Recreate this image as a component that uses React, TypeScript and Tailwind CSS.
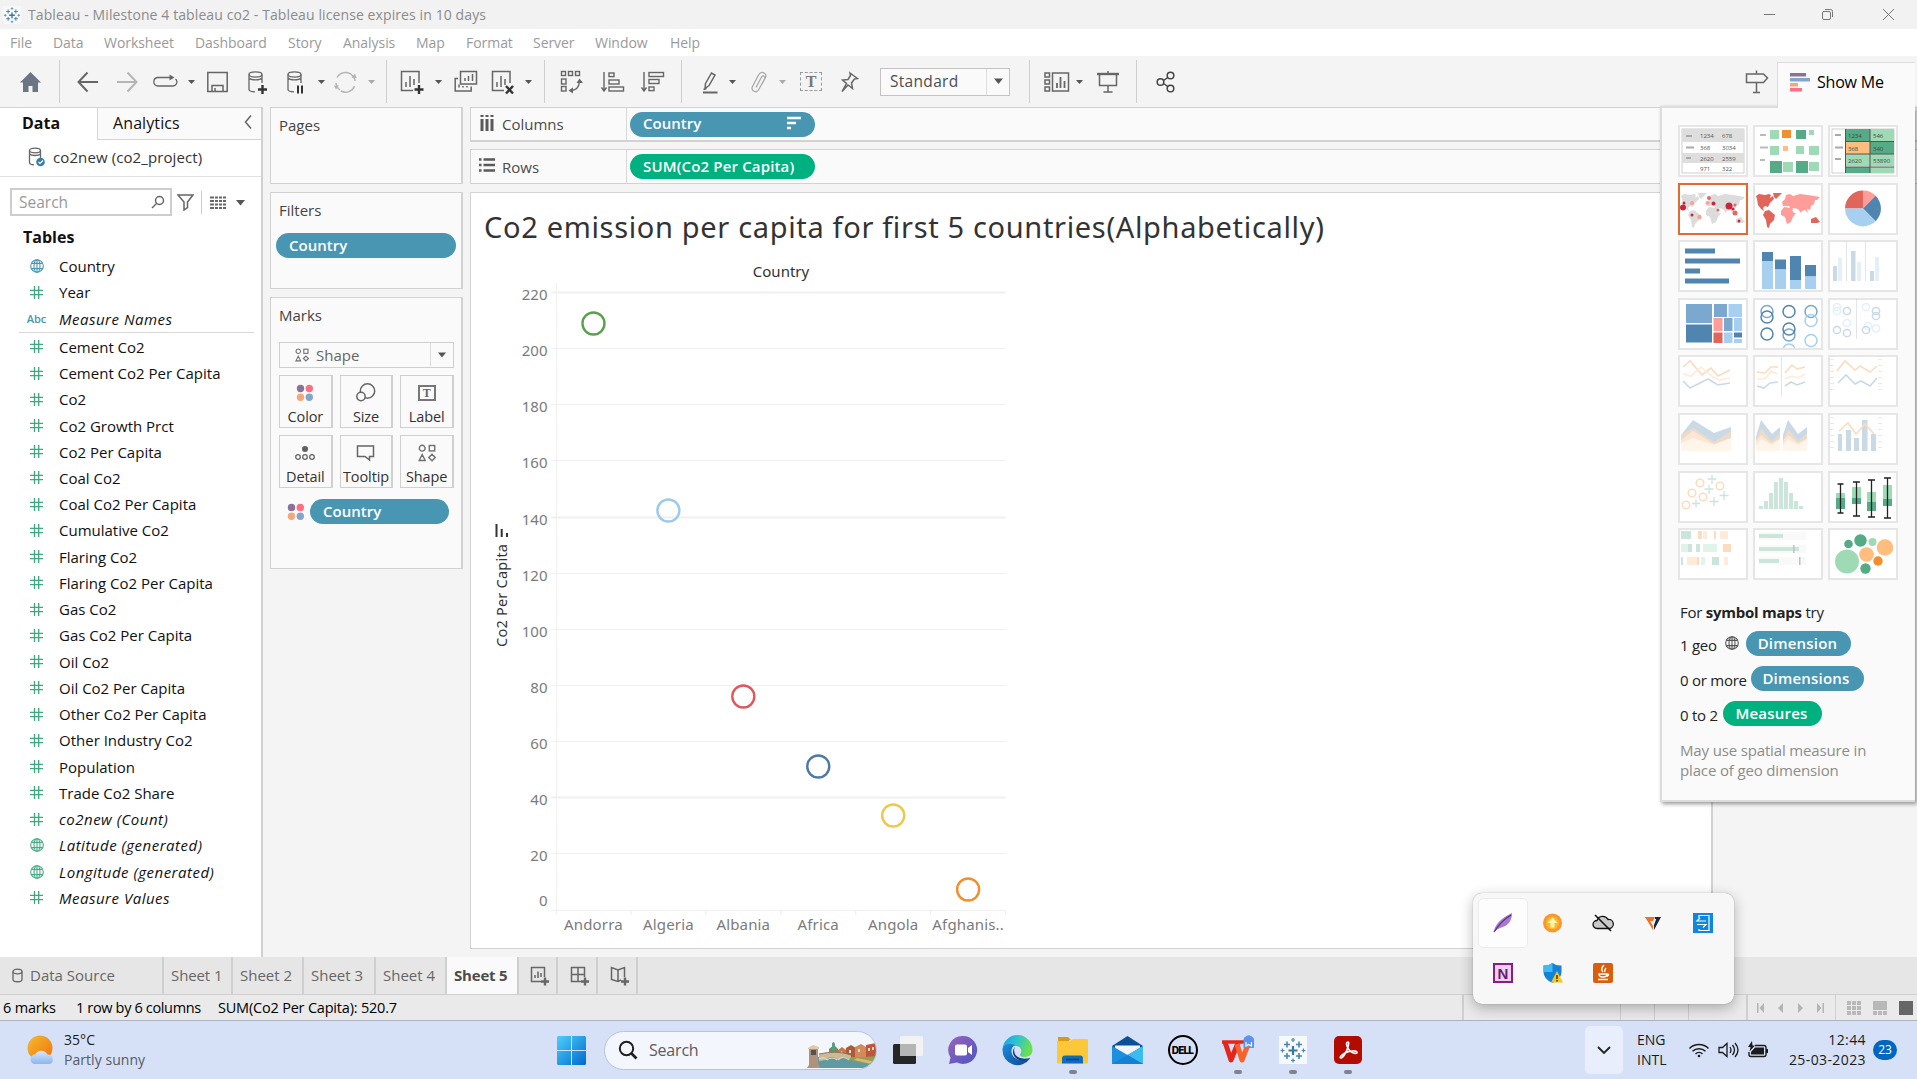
import type { ReactNode } from "react";

const G = "#666666";

function Svg({ w, h = 30, className = "", children, stroke = G, sw = 1.5, fill = "none" }: { w: number; h?: number; className?: string; children: ReactNode; stroke?: string; sw?: number; fill?: string }) {
  return (
    <svg width={w} height={h} viewBox={`0 0 ${w} ${h}`} className={`shrink-0 ${className}`} fill={fill} stroke={stroke} strokeWidth={sw}>
      {children}
    </svg>
  );
}

function Tri({ className = "", color = "#555" }: { className?: string; color?: string }) {
  return (
    <Svg w={7} h={6} className={className} fill={color} stroke="none">
      <path d="M0 1h7L3.500 5z" />
    </Svg>
  );
}

function Sep({ className }: { className: string }) {
  return <div className={`h-[43px] w-px shrink-0 bg-[#cfcfcf] ${className}`} />;
}

function TableauMark({ size, className = "" }: { size: number; className?: string }) {
  return (
    <svg width={size} height={size} viewBox="0 0 28 28" className={`shrink-0 ${className}`} fill="none" stroke="#4a86ad" strokeWidth="1.6">
      <rect x="0" y="0" width="28" height="28" fill="#f7f8fa" stroke="none" />
      <path d="M14 10v9M9.500 14.500h9" strokeWidth="2.200" stroke="#3b78a0" />
      <path d="M8 5.500v6M5 8.500h6M20 5.500v6M17 8.500h6M8 17v6M5 20h6M20 17v6M17 20h6" />
      <path d="M14 2v4M12 4h4M14 22.500v4M12 24.500h4M3.500 12.500v4M1.500 14.500h4M24.500 12.500v4M22.500 14.500h4" strokeWidth="1.2" />
    </svg>
  );
}

function Globe({ color, size = 14 }: { color: string; size?: number }) {
  return (
    <svg width={size} height={size} viewBox="0 0 14 14" className="shrink-0" fill="none" stroke={color} strokeWidth="1.1">
      <circle cx="7" cy="7" r="6.300" />
      <ellipse cx="7" cy="7" rx="3" ry="6.300" />
      <path d="M7 .7v12.600M1.500 4.400h11M1.500 9.600h11" />
    </svg>
  );
}

function Dots() {
  return (
    <Svg w={18} h={18} stroke="none">
      <circle cx="4.500" cy="4.500" r="3.700" fill="#8a729b" />
      <circle cx="13.300" cy="4.500" r="3.700" fill="#fb7183" />
      <circle cx="4.500" cy="13.300" r="3.700" fill="#f3a879" />
      <circle cx="13.300" cy="13.300" r="3.700" fill="#84a5cb" />
    </Svg>
  );
}

function ShapeIcon({ size = 18 }: { size?: number }) {
  return (
    <svg width={size} height={size} viewBox="0 0 18 18" fill="none" stroke="#707070" strokeWidth="1.4" className="shrink-0">
      <circle cx="4.200" cy="4.200" r="2.900" />
      <rect x="11.300" y="1.500" width="5.400" height="5.400" />
      <path d="M4.200 10.500l3 6h-6zM14 10.300l3.200 3.200-3.200 3.200-3.200-3.200z" />
    </svg>
  );
}

function TitleBar() {
  return (
    <div className="flex h-[29px] shrink-0 items-center bg-[#f2f2f2] font-['Open_Sans',sans-serif] text-[14px] text-[#8b8b8b]">
      <TableauMark size={18} className="ml-[3px]" />
      <span className="ml-[7px] tracking-[0.1px]">Tableau - Milestone 4 tableau co2 - Tableau license expires in 10 days</span>
      <Svg w={130} h={20} className="mr-[23px] ml-auto" stroke="#777" sw={1}>
        <path d="M0 9.500h11M119 4l11 11M130 4l-11 11" />
        <rect x="58.500" y="6.500" width="8" height="8" rx="1.500" />
        <path d="M61 4.500h5.500a2 2 0 0 1 2 2V12" />
      </Svg>
    </div>
  );
}

const menus: [string, string][] = [
  ["File", "w-[43px]"], ["Data", "w-[51px]"], ["Worksheet", "w-[91px]"], ["Dashboard", "w-[93px]"], ["Story", "w-[55px]"], ["Analysis", "w-[73px]"],
  ["Map", "w-[50px]"], ["Format", "w-[67px]"], ["Server", "w-[62px]"], ["Window", "w-[75px]"], ["Help", "w-[50px]"],
];

function MenuBar() {
  return (
    <div className="flex h-[27px] shrink-0 items-center bg-white pl-[10px] font-['Open_Sans',sans-serif] text-[14px] tracking-[-0.05px] text-[#9a9a9a]">
      {menus.map(([m, w]) => (
        <span key={m} className={`${w} shrink-0 whitespace-nowrap`}>{m}</span>
      ))}
    </div>
  );
}

function Toolbar() {
  return (
    <div className="flex h-[51px] shrink-0 items-center bg-[#f4f4f4]">
      <Svg w={21} className="ml-[20px]" fill="#6b7584" stroke="none">
        <path d="M10.500 5L0 15.500h3V25h5.500v-6h4v6H18v-9.500h3z" />
      </Svg>
      <Sep className="ml-[18px]" />
      <Svg w={21} className="ml-[17px]" sw={2}><path d="M10.500 5.500L1.500 15l9 9.500M1.500 15H21" /></Svg>
      <Svg w={21} className="ml-[19px]" sw={2} stroke="#b5b5b5"><path d="M10.500 5.500l9 9.500-9 9.500M19.500 15H0" /></Svg>
      <Svg w={25} className="ml-[15px]" sw={1.3}>
        <path d="M17 10.500H4.500a4.300 4.300 0 0 0 0 8.500H20a4 4 0 0 0 2.500-7" />
        <path d="M16.500 7.500l5 3-5 3z" fill={G} stroke="none" />
      </Svg>
      <Tri className="ml-[10px]" />
      <Svg w={21} className="ml-[12px]">
        <rect x=".8" y="5.500" width="19.400" height="19" />
        <path d="M5 24.500v-6h11v6M8 24v-3" />
      </Svg>
      <Svg w={19} className="ml-[20px]" sw={1.300}>
        <ellipse cx="7.500" cy="7.500" rx="6.500" ry="2.600" />
        <path d="M1 7.500v15c0 1.300 2.500 2.200 6 2.300M14 7.500V16M1 11c2 2.500 11 2.500 13 0" />
        <path d="M14.500 18v9M10 22.500h9" stroke="#333" strokeWidth="2.400" />
      </Svg>
      <Svg w={17} className="ml-[20px]" sw={1.300}>
        <ellipse cx="7.500" cy="7.500" rx="6.500" ry="2.600" />
        <path d="M1 7.500v15c0 1.300 2.500 2.200 6 2.300M14 7.500V16M1 11c2 2.500 11 2.500 13 0" />
        <path d="M11 18.500v8M15 18.500v8" stroke="#333" strokeWidth="2" />
      </Svg>
      <Tri className="ml-[14px]" />
      <Svg w={23} className="ml-[9px]" stroke="#b5b5b5">
        <path d="M3 10.500a9.500 9.500 0 0 1 16.500-.5M2 16a9.500 9.500 0 0 0 4 7M20.500 19A9.500 9.500 0 0 1 7 24M21 14a9.500 9.500 0 0 0-1-3.500" />
        <path d="M17.500 11h5l-1.500-4.500zM5 18.500H0l2 4z" fill="#b5b5b5" stroke="none" />
      </Svg>
      <Tri className="ml-[11px]" color="#aaa" />
      <Sep className="ml-[11px]" />
      <Svg w={25} className="ml-[13px]">
        <path d="M13 23.500H1.500v-19H19V16M6 20v-5M10 20V9M14 18v-6" />
        <path d="M19 18v9M14.500 22.500h9" stroke="#333" strokeWidth="2.400" />
      </Svg>
      <Tri className="ml-[10px]" />
      <Svg w={24} className="ml-[12px]">
        <rect x="6.500" y="4.500" width="16" height="12.500" />
        <path d="M11 14v-3M14.500 14V9M18.500 14V7M4 11.500H1.200V24h16v-4.500M5 20.500v-3M9 20.500v-1.500M13 20.500v-1.500" />
      </Svg>
      <Svg w={24} className="ml-[13px]">
        <path d="M13 23.500H1.500v-19H19V16M6 20v-5M10 20V9M14 18v-6" />
        <path d="M15 19l7 7.500M22 19l-7 7.500" stroke="#333" strokeWidth="2.400" />
      </Svg>
      <Tri className="ml-[10px]" />
      <Sep className="ml-[12px]" />
      <Svg w={24} className="ml-[15px]" sw={1.4}>
        <rect x="1.500" y="4.500" width="4" height="4" /><rect x="8.500" y="4.500" width="4" height="4" /><rect x="15.500" y="4.500" width="4" height="4" />
        <rect x="1.500" y="12" width="4.500" height="5" /><rect x="1.500" y="19.500" width="4.500" height="4.500" />
        <path d="M10.500 23.500c5 0 8.500-3 9-9" />
        <path d="M16.500 16l3-4.500 3.500 4.500zM13 20.500l-4.500 3 4.500 3z" fill={G} stroke="none" />
      </Svg>
      <Svg w={24} className="ml-[17px]" sw={1.4}>
        <path d="M3 5v19M.5 20.500L3 24l2.500-3.500" />
        <rect x="8" y="6" width="5" height="3.600" /><rect x="8" y="13" width="10" height="4" /><rect x="8" y="20" width="14.500" height="4" />
      </Svg>
      <Svg w={24} className="ml-[16px]" sw={1.4}>
        <path d="M3 5v19M.5 20.500L3 24l2.500-3.500" />
        <rect x="8" y="5.500" width="14.500" height="4" /><rect x="8" y="12.500" width="10" height="4" /><rect x="8" y="20" width="5" height="3.600" />
      </Svg>
      <Sep className="ml-[16px]" />
      <Svg w={17} className="ml-[20px]">
        <path d="M3.500 16.500L9.500 6l3.500 2-6 10.500-4 3z" /><path d="M1.500 22.500l3-1" /><path d="M1 25.500h14.500" strokeWidth="2" />
      </Svg>
      <Tri className="ml-[10px]" />
      <Svg w={18} className="ml-[14px]" stroke="#aaa">
        <path d="M6 20.500l5.500-10.500c1.500-2.500 4 0 3 2L8.500 23c-2 3.500-8 1-6-3.500L8.500 8c3-5 9-1.500 7 2.500L12 17" strokeWidth="1.3" />
      </Svg>
      <Tri className="ml-[11px]" color="#aaa" />
      <span className="ml-[14px] flex h-[19px] w-[22px] shrink-0 items-center justify-center border border-dashed border-[#999] font-['Liberation_Serif',serif] text-[16px] leading-none font-bold text-[#777]">T</span>
      <Svg w={18} className="ml-[19px]">
        <path d="M9 6l7.500 5.500-3 .5-3 4 1 5.500-4.500-3.500-6 6.500 4.500-8L1.500 13l5.500-.5 2.500-4z" />
      </Svg>
      <div className="ml-[21px] flex h-[28px] w-[130px] shrink-0 items-center border border-[#c4c4c4] bg-[#fafafa] pl-[9px] font-['Open_Sans',sans-serif] text-[15.500px] tracking-[0.3px] text-[#4e4e4e]">
        Standard
        <span className="ml-auto flex h-full w-[23px] items-center justify-center border-l border-[#ddd]">
          <Svg w={9} h={7} fill="#555" stroke="none"><path d="M0 .5h9L4.500 6z" /></Svg>
        </span>
      </div>
      <Sep className="ml-[19px]" />
      <Svg w={26} className="ml-[14px]">
        <rect x="1" y="6" width="4.500" height="4" /><rect x="1" y="13" width="4.500" height="4" /><rect x="1" y="20" width="4.500" height="4" />
        <rect x="8.500" y="6" width="16" height="18" />
        <path d="M13 21v-5M16.500 21V10M20.500 21v-7" strokeWidth="1.800" />
      </Svg>
      <Tri className="ml-[6px]" />
      <Svg w={22} className="ml-[14px]">
        <path d="M0 7h22" strokeWidth="2.400" /><path d="M2.500 8v10.500h17V8M11 19v6M6.500 25h9M11 4v3" />
      </Svg>
      <Sep className="ml-[17px]" />
      <Svg w={20} className="ml-[19px]" stroke="#444">
        <circle cx="4.500" cy="15" r="3.300" /><circle cx="14.500" cy="8.500" r="3.300" /><circle cx="14.500" cy="21.500" r="3.300" /><path d="M7.500 13.500l4.300-3M7.500 16.500l4.300 3" />
      </Svg>
      <Svg w={24} className="mr-[148px] ml-auto">
        <path d="M1.500 7h17l4 4-4 4.500h-17zM11.500 3.500V7M11.500 15.500V25M8 25.500h7" />
      </Svg>
    </div>
  );
}

type Kind = "geo" | "num" | "abc";

function Field({ name, kind = "num", italic, dim }: { name: string; kind?: Kind; italic?: boolean; dim?: boolean }) {
  return (
    <div className="flex h-[26.240px] shrink-0 items-center pl-[26px]">
      <span className="flex w-[21px] shrink-0 items-center justify-center">
        {kind === "geo" && <Globe color={dim ? "#4996b2" : "#45ac86"} />}
        {kind === "num" && (
          <Svg w={13} h={13} stroke="#3fa67e" sw={1.3}>
            <path d="M4.500 0v13M8.700 0v13M0 4.300h13M0 8.700h13" />
          </Svg>
        )}
        {kind === "abc" && <span className="font-['Open_Sans',sans-serif] text-[11px] font-semibold text-[#4996b2]">Abc</span>}
      </span>
      <span className={`ml-[12px] whitespace-nowrap ${italic ? "tracking-[0.5px] italic" : ""}`}>{name}</span>
    </div>
  );
}

const measures: [string, Kind, boolean][] = [
  ...["Cement Co2", "Cement Co2 Per Capita", "Co2", "Co2 Growth Prct", "Co2 Per Capita", "Coal Co2", "Coal Co2 Per Capita", "Cumulative Co2", "Flaring Co2", "Flaring Co2 Per Capita", "Gas Co2", "Gas Co2 Per Capita", "Oil Co2", "Oil Co2 Per Capita", "Other Co2 Per Capita", "Other Industry Co2", "Population", "Trade Co2 Share"].map((n) => [n, "num", false] as [string, Kind, boolean]),
  ["co2new (Count)", "num", true],
  ["Latitude (generated)", "geo", true],
  ["Longitude (generated)", "geo", true],
  ["Measure Values", "num", true],
];

function DataPane() {
  return (
    <div className="flex w-[263px] shrink-0 flex-col border-r-2 border-[#d0d0d0] bg-white text-[#111]">
      <div className="flex h-[33px] shrink-0">
        <div className="w-[97px] border-t border-[#d4d4d4] pt-[4px] pl-[22px] text-[16px] font-bold">Data</div>
        <div className="flex flex-1 items-start border-t border-b border-l border-[#d4d4d4] bg-[#fafafa] pt-[4px] pl-[15px] text-[16px] tracking-[0.1px]">
          Analytics
          <Svg w={8} h={14} className="mt-[3px] mr-[9px] ml-auto"><path d="M7 .5L1.500 7 7 13.500" /></Svg>
        </div>
      </div>
      <div className="flex h-[37px] shrink-0 items-center border-b border-[#e0e0e0] pb-[2px] pl-[28px] text-[#333]">
        <Svg w={17} h={20} sw={1.3}>
          <ellipse cx="7" cy="3.500" rx="5.500" ry="2.300" />
          <path d="M1.500 3.500v12c0 1.300 2 2.200 4.500 2.300M12.500 3.500V11M1.500 7c2 2 9 2 11 0" />
          <circle cx="12.500" cy="15" r="4.300" fill="#3b7f9f" stroke="none" />
          <path d="M10.500 15l1.500 1.500 3-3" stroke="#fff" strokeWidth="1.1" />
        </Svg>
        <span className="ml-[8px] tracking-[0.100px]">co2new (co2_project)</span>
      </div>
      <div className="mt-[11px] flex h-[28px] shrink-0 items-center pl-[10px]">
        <div className="flex h-[28px] w-[162px] items-center border-2 border-[#cdcdcd] pr-[5px] pl-[7px] text-[15.500px] text-[#999]">
          Search
          <Svg w={14} h={14} className="ml-auto"><circle cx="8.500" cy="5.500" r="4" /><path d="M5.500 8.500L1 13" /></Svg>
        </div>
        <Svg w={17} h={18} className="ml-[5px]"><path d="M1 2h15l-5.500 7v5.500L7 17V9z" /></Svg>
        <div className="ml-[7px] h-[23px] w-px bg-[#ccc]" />
        <Svg w={16} h={13} className="ml-[8px]" sw={1.800}>
          <path d="M0 1.500h4M5 1.500h3M9 1.500h3M13 1.500h3M0 5h4M5 5h3M9 5h3M13 5h3M0 8.500h4M5 8.500h3M9 8.500h3M13 8.500h3M0 12h4M5 12h3M9 12h3M13 12h3" />
        </Svg>
        <Svg w={10} h={7} className="ml-[10px]" fill="#555" stroke="none"><path d="M0 1h9L4.500 6.500z" /></Svg>
      </div>
      <div className="mt-[8px] h-[29px] shrink-0 pl-[23px] text-[16px] leading-[26px] font-bold">Tables</div>
      <div className="flex flex-col">
        <Field name="Country" kind="geo" dim />
        <Field name="Year" />
        <Field name="Measure Names" kind="abc" italic />
      </div>
      <div className="mr-[7px] ml-[19px] h-px shrink-0 bg-[#d8d8d8]" />
      <div className="mt-[1px] flex flex-col">
        {measures.map(([n, k, i]) => (
          <Field key={n} name={n} kind={k} italic={i} />
        ))}
      </div>
    </div>
  );
}

function Card({ className, title, children }: { className: string; title: string; children?: ReactNode }) {
  return (
    <div className={`w-[193px] shrink-0 border border-r-2 border-[#d2d2d2] bg-[#fafafa] text-[#444] ${className}`}>
      <div className="pt-[5px] pb-px pl-[8px] leading-[24px]">{title}</div>
      {children}
    </div>
  );
}

function MarkButton({ label, children }: { label: string; children: ReactNode }) {
  return (
    <div className="flex h-[53px] flex-col items-center border border-r-2 border-[#d0d0d0] text-[14.500px] tracking-[-0.1px] text-[#333]">
      <div className="flex h-[31px] items-center pt-[3px]">{children}</div>
      <div className="leading-[20px]">{label}</div>
    </div>
  );
}

function Cards() {
  return (
    <div className="flex w-[207px] shrink-0 flex-col gap-2 pl-[7px]">
      <Card title="Pages" className="h-[77px]" />
      <Card title="Filters" className="h-[97px]">
        <div className="mt-[10px] ml-[5px] flex h-[25px] w-[180px] items-center rounded-full bg-[#4996b2] pb-[2px] pl-[13px] font-semibold text-white">Country</div>
      </Card>
      <Card title="Marks" className="h-[272px]">
        <div className="mt-[14px] ml-[8px] flex h-[26px] w-[175px] items-center border border-[#cfcfcf] pb-px pl-[15px] text-[#666]">
          <ShapeIcon size={14} />
          <span className="ml-[7px]">Shape</span>
          <span className="ml-auto flex h-full w-[23px] items-center justify-center border-l border-[#ddd]">
            <Svg w={8} h={6} fill="#555" stroke="none"><path d="M0 .5h8L4 5.500z" /></Svg>
          </span>
        </div>
        <div className="mt-[7px] ml-[8px] grid w-[175px] grid-cols-3 gap-[7px]">
          <MarkButton label="Color"><Dots /></MarkButton>
          <MarkButton label="Size"><Svg w={20} h={20}><circle cx="11.500" cy="8" r="7.200" /><circle cx="5" cy="13.500" r="4.200" fill="#fafafa" /></Svg></MarkButton>
          <MarkButton label="Label">
            <span className="flex h-[16px] w-[18px] items-center justify-center border-2 border-[#777] font-['Liberation_Serif',serif] text-[12px] leading-none font-bold text-[#666]">T</span>
          </MarkButton>
          <MarkButton label="Detail">
            <Svg w={20} h={18} sw={1.3}><circle cx="10" cy="5" r="3" fill="#606060" stroke="none" /><circle cx="3" cy="13" r="2.300" /><circle cx="10" cy="13" r="2.300" /><circle cx="17" cy="13" r="2.300" /></Svg>
          </MarkButton>
          <MarkButton label="Tooltip"><Svg w={19} h={18}><path d="M1.500 2h16v10.500h-4V16l-4.500-3.500H1.500z" /></Svg></MarkButton>
          <MarkButton label="Shape"><ShapeIcon /></MarkButton>
        </div>
        <div className="mt-[11px] ml-[16px] flex items-center">
          <Dots />
          <div className="ml-[5px] flex h-[25px] w-[139px] items-center rounded-full bg-[#4996b2] pb-px pl-[13px] font-semibold text-white">Country</div>
        </div>
      </Card>
    </div>
  );
}

const X0 = 86, PITCH = 74.93;
const points: [string, number, string][] = [
  ["Andorra", 130.500, "#59a14f"], ["Algeria", 317.500, "#9ecae9"], ["Albania", 503.500, "#e15759"],
  ["Africa", 573.500, "#4e79a7"], ["Angola", 622.500, "#edc948"], ["Afghanis..", 696.500, "#f28e2b"],
];

function Chart() {
  return (
    <svg width="560" height="690" viewBox="0 0 560 690" className="mt-[8px] block font-['Noto_Sans',sans-serif]" fontSize="15">
      <g transform="translate(-1,-65)">
        <text x="311" y="84" textAnchor="middle" fill="#333" fontSize="15">Country</text>
        {Array.from({ length: 12 }, (_, i) => {
          const y = Math.round(717.5 - i * 56.14) - 0.5;
          return (
            <g key={i}>
              <path d={`M${X0 - 5} ${y}H${X0 + 449.500}`} stroke="#f0f0f0" strokeWidth={i === 2 || i === 7 || i === 11 ? 2 : 1.200} />
              <text x="77.500" y={i === 0 ? 713 : y + 7.800} textAnchor="end" fill="#7b7b7b">{i * 20}</text>
            </g>
          );
        })}
        <path d={`M${X0 + 0.5} 90V722`} stroke="#f0f0f0" />
        {points.map(([n, y, c], i) => (
          <g key={n}>
            <path d={`M${X0 + PITCH * (i + 1)} 718v4`} stroke="#ececec" />
            <circle cx={X0 + PITCH * (i + 0.5)} cy={y} r="11" fill="none" stroke={c} strokeWidth="2.400" />
            <text x={X0 + PITCH * (i + 0.5)} y="737" textAnchor="middle" fill="#7b7b7b" letterSpacing="0.150">{n}</text>
          </g>
        ))}
        <text transform="translate(37,454) rotate(-90)" fontSize="14.500" fill="#333" textLength="103">Co2 Per Capita</text>
        <path d="M26.500 344v-13M31.700 344v-8M37 344v-4" stroke="#333" strokeWidth="2" />
      </g>
    </svg>
  );
}

function Shelf({ label, icon, children, className }: { label: string; icon: ReactNode; children: ReactNode; className: string }) {
  return (
    <div className={`flex h-[35px] shrink-0 items-center border border-r-0 border-[#d2d2d2] bg-[#fafafa] text-[#4a4a4a] ${className}`}>
      <div className="flex h-full w-[156px] items-center border-r border-[#d8d8d8] pl-[8px]">
        {icon}
        <span className="ml-[7px]">{label}</span>
      </div>
      {children}
    </div>
  );
}

function Worksheet() {
  return (
    <div className="flex min-w-0 flex-1 flex-col">
      <Shelf className="border-b-2" label="Columns" icon={<Svg w={16} h={16} className="-mt-[3px]" sw={3} stroke="#5a5a5a"><path d="M3 0v2M8 0v2M13 0v2M3 4v12M8 4v12M13 4v12" /></Svg>}>
        <div className="ml-[3px] flex h-[25px] w-[185px] items-center rounded-full bg-[#4996b2] pr-[14px] pb-[2px] pl-[13px] font-semibold text-white">
          Country
          <Svg w={14} h={14} className="ml-auto" stroke="#fff" sw={2.400}><path d="M0 2h14M0 7h9M0 12h4" /></Svg>
        </div>
      </Shelf>
      <Shelf className="mt-[7px]" label="Rows" icon={<Svg w={16} h={16} className="-mt-[3px]" sw={2.400} stroke="#5a5a5a"><path d="M0 2.500h2.500M4.500 2.500H16M0 8h2.500M4.500 8H16M0 13.500h2.500M4.500 13.500H16" /></Svg>}>
        <div className="-mt-px ml-[3px] flex h-[25px] w-[185px] items-center rounded-full bg-[#00b180] pb-px pl-[13px] font-semibold tracking-[0.150px] whitespace-nowrap text-white">SUM(Co2 Per Capita)</div>
      </Shelf>
      <div className="mt-2 h-[757px] w-[1243px] border border-r-2 border-[#d2d2d2] bg-white">
        <div className="pt-[11px] pl-[13px] font-['Noto_Sans',sans-serif] text-[29px] leading-[46px] tracking-[0.660px] whitespace-nowrap text-[#333]">Co2 emission per capita for first 5 countries(Alphabetically)</div>
        <Chart />
      </div>
    </div>
  );
}

function SheetTabs() {
  const tab = "flex h-full shrink-0 items-center border-r-2 border-[#cfcfcf]";
  return (
    <div className="flex h-[38px] shrink-0 items-center border-b border-[#cfcfcf] bg-[#e6e6e6] text-[#666]">
      <div className={`${tab} w-[164px] pl-[12px]`}>
        <Svg w={11} h={15} sw={1.3}><ellipse cx="5.500" cy="3.500" rx="4.500" ry="2.300" /><path d="M1 3.500v8c0 3 9 3 9 0v-8" /></Svg>
        <span className="ml-[7px]">Data Source</span>
      </div>
      <div className={`${tab} w-[69px] pl-[7px] tracking-[-0.1px]`}>Sheet 1</div>
      <div className={`${tab} w-[71px] pl-[7px]`}>Sheet 2</div>
      <div className={`${tab} w-[72px] pl-[7px]`}>Sheet 3</div>
      <div className={`${tab} w-[71px] pl-[7px]`}>Sheet 4</div>
      <div className={`${tab} w-[72px] bg-[#fafafa] pb-px pl-[7px] font-bold tracking-[-0.2px] text-[#4c4c4c]`}>Sheet 5</div>
      <div className={`${tab} w-[39px] pl-[11px]`}>
        <Svg w={20} h={20}><path d="M11 15.500H1.500v-14h13V11M5 12v-3M8 12V5.500M11 11V7" /><path d="M15 11.500v8M11 15.500h8" strokeWidth="2.400" /></Svg>
      </div>
      <div className={`${tab} w-[40px] pl-[12px]`}>
        <Svg w={20} h={20}><path d="M11 15.500H1.500v-14h13V11M8 1.500v14M1.500 8.500h13" /><path d="M15 11.500v8M11 15.500h8" strokeWidth="2.400" /></Svg>
      </div>
      <div className={`${tab} w-[40px] pl-[12px]`}>
        <Svg w={20} h={20}><path d="M11 14l-3 1.500-6.500-2v-12L8 4l6.500-2.500V11M8 4v11" /><path d="M15 11.500v8M11 15.500h8" strokeWidth="2.400" /></Svg>
      </div>
    </div>
  );
}

function StatusBar() {
  return (
    <div className="flex h-[26px] shrink-0 items-center border-b border-[#adb3c0] bg-[#eaeaea] pl-[3px] text-[14.500px] tracking-[-0.2px] text-black">
      <span className="w-[73px]">6 marks</span>
      <span className="w-[142px] tracking-[-0.35px]">1 row by 6 columns</span>
      <span>SUM(Co2 Per Capita): 520.7</span>
      <div className="ml-auto flex h-full items-center">
        <div className="h-full w-[159px] border-r border-l-2 border-[#cfcfcf]" />
        <div className="h-full w-[34px] border-r border-[#cfcfcf]" />
        <div className="h-full w-[34px] border-r border-[#cfcfcf]" />
        <div className="h-full w-[59px] border-r-2 border-[#cfcfcf]" />
        <div className="flex h-full w-[88px] items-center border-r border-[#cfcfcf] pl-[9px]">
          <Svg w={70} h={10} fill="#b4b4b4" stroke="none">
            <path d="M0 0h1.500v10H0zM7 0v10L2.500 5zM26 0v10L21 5zM41 0v10l5-5zM60 0v10l4.500-5zM65.500 0H67v10h-1.500z" />
          </Svg>
        </div>
        <div className="flex w-[81px] items-center gap-[12px] pl-[11px]">
          <Svg w={14} h={14} fill="#b8b8b8" stroke="none"><path d="M0 0h4v4H0zM5 0h4v4H5zM10 0h4v4h-4zM0 5h4v4H0zM5 5h4v4H5zM10 5h4v4h-4zM0 10h4v4H0zM5 10h4v4H5zM10 10h4v4h-4z" /></Svg>
          <Svg w={14} h={14} fill="#b8b8b8" stroke="none"><path d="M0 0h14v9H0zM0 10h4v4H0zM5 10h4v4H5zM10 10h4v4h-4z" /></Svg>
          <div className="size-[14px] bg-[#666]" />
        </div>
      </div>
    </div>
  );
}

function SearchArt() {
  return (
    <svg width="69" height="26" viewBox="0 0 69 26" className="mt-[10px] shrink-0">
      <path d="M10 15l60-1v12H8z" fill="#5f9aa3" />
      <path d="M42 12h27v12l-27-6z" fill="#8fa04e" />
      <path d="M50 16l19 4v3l-22-5z" fill="#d7b878" />
      <path d="M22 7l5-4 4 4v8h-9z" fill="#6c8f5a" />
      <path d="M25 1l2-1 1 2v6h-3z" fill="#5a9a86" />
      <path d="M31 8l4-3 4 3v7h-8z" fill="#c9764a" />
      <path d="M39 6l5-3 5 3v9H39z" fill="#a95b3e" />
      <path d="M48 5l6-3 5 3v10H48z" fill="#d08a5b" />
      <path d="M59 3l10-2v13l-10 1z" fill="#c2543d" />
      <path d="M61 6h2v3h-2zM65 5h2v3h-2zM51 7h2v3h-2zM42 8h2v3h-2zM34 9h1v3h-1z" fill="#f2dfb8" />
      <path d="M12 12q18-4 32 1v2l-2 3q-5-6-10 0h-2q-5-6-11 0l-7 1v-3z" fill="#cdb995" />
      <path d="M12 17q6-3 8 1 5-4 10 0M31 18q5-5 11 0" stroke="#e8ddc4" fill="none" />
      <path d="M12 12q18-4 32 1" stroke="#8b7960" fill="none" />
      <path d="M1 6l5-3 6 2v2H1z" fill="#e3c6a3" />
      <path d="M2 7h9v15l2 2v2H0l2-3z" fill="#b0917a" />
      <path d="M4 8h5v5H4z" fill="#55504c" />
    </svg>
  );
}

function TaskIcon({ children, running }: { children: ReactNode; running?: boolean }) {
  return (
    <div className="relative flex h-full w-[55px] shrink-0 items-center justify-center">
      {children}
      {running && <span className="absolute bottom-[5px] h-[4px] w-[8px] rounded-full bg-[#7d8390]" />}
    </div>
  );
}

function Taskbar() {
  return (
    <div className="flex h-[58px] shrink-0 items-center bg-[#d6e1f8] font-['Open_Sans',sans-serif] text-[14px] tracking-[-0.2px] text-[#1b1b1b]">
      <svg width="30" height="32" viewBox="0 0 30 32" className="ml-[26px] shrink-0">
        <defs>
          <linearGradient id="sun" x1="0" y1="0" x2="1" y2="1"><stop offset="0" stopColor="#f5bd2e" /><stop offset="1" stopColor="#f0700f" /></linearGradient>
          <linearGradient id="cloud" x1="0" y1="0" x2="0" y2="1"><stop offset="0" stopColor="#d8e8fb" /><stop offset="1" stopColor="#8db5ee" /></linearGradient>
        </defs>
        <circle cx="14" cy="14" r="12.500" fill="url(#sun)" />
        <path d="M8 30a5 5 0 0 1 0-9.500h1a7 7 0 0 1 12.500 0A5 5 0 0 1 24 30z" fill="url(#cloud)" />
      </svg>
      <div className="ml-[8px] w-[487px] leading-[20px] tracking-[0.05px]">
        <div>35°C</div>
        <div className="text-[#555b66]">Partly sunny</div>
      </div>
      <svg width="29" height="29" viewBox="0 0 29 29" className="ml-[6px] shrink-0">
        <defs><linearGradient id="win" x1="0" y1="0" x2="1" y2="1"><stop offset="0" stopColor="#4dd0fb" /><stop offset="1" stopColor="#0069cf" /></linearGradient></defs>
        <path d="M1 0h13v14H0V1zM15 0h13l1 1v13H15zM0 15h14v14H1l-1-1zM15 15h14v13l-1 1H15z" fill="url(#win)" />
      </svg>
      <div className="ml-[18px] flex h-[39px] w-[273px] shrink-0 items-center overflow-hidden rounded-full border border-[#b8c4dc] bg-[#f3f6fd] pl-[13px] text-[16px] text-[#5c5c5c]">
        <Svg w={20} h={20} stroke="#1f1f1f" sw={2}><circle cx="8.500" cy="8.500" r="6.700" /><path d="M13.500 13.500l5 5" strokeWidth="2.600" /></Svg>
        <span className="ml-[11px]">Search</span>
        <span className="ml-auto"><SearchArt /></span>
      </div>
      <div className="ml-[3px] flex h-full items-center">
        <TaskIcon>
          <svg width="30" height="29" viewBox="0 0 30 29"><rect x="0" y="8" width="23" height="20" rx="1.500" fill="#262626" /><rect x="7" y="0" width="23" height="20" rx="1.500" fill="#f2f2f2" /><path d="M7 8h16v12H7z" fill="#b5b5b5" /></svg>
        </TaskIcon>
        <TaskIcon>
          <svg width="30" height="30" viewBox="0 0 30 30"><defs><linearGradient id="chat" x1="0" y1="0" x2="1" y2="1"><stop offset="0" stopColor="#9a64b8" /><stop offset="1" stopColor="#4a54c6" /></linearGradient></defs><path d="M15 1a14 14 0 1 1-6 26.600L1 29l1.500-6.500A14 14 0 0 1 15 1z" fill="url(#chat)" /><rect x="7" y="9.500" width="12" height="11" rx="2" fill="#fff" /><path d="M20 13l4-3v10l-4-3z" fill="#fff" /></svg>
        </TaskIcon>
        <TaskIcon>
          <svg width="31" height="31" viewBox="0 0 31 31">
            <defs>
              <linearGradient id="e1" x1="0" y1="0" x2="1" y2=".3"><stop offset="0" stopColor="#1e9bdf" /><stop offset=".5" stopColor="#2cc3d2" /><stop offset="1" stopColor="#6be04e" /></linearGradient>
              <linearGradient id="e2" x1="0" y1="0" x2="1" y2="1"><stop offset="0" stopColor="#1a8fdd" /><stop offset="1" stopColor="#10458f" /></linearGradient>
            </defs>
            <path d="M.5 15A15 15 0 0 1 30.500 15c0 5-4 7-8 7-3 0-5-1-4.500-2.500 3-4 .5-8.500-4.500-8.500C8 11 3 12 .5 15z" fill="url(#e1)" />
            <path d="M.5 15C1 9 8 8 13 10c-2 1-3.500 3-3.500 6 0 7 8 11.500 18.500 7.500A15 15 0 0 1 .5 15z" fill="url(#e2)" />
            <path d="M13.500 11.500c-2.500 3-1.500 8 2.500 10.500 4 2.300 9 2 12 .8l-.5 1.200C21 27 12 25 11 18c-.3-3 1-5.500 2.500-6.500z" fill="#0f3f86" />
          </svg>
        </TaskIcon>
        <TaskIcon running>
          <svg width="31" height="28" viewBox="0 0 31 28"><path d="M1 1h10l3 3h-2v7H1z" fill="#d99a0b" /><path d="M0 5h13l3-2h14q1 0 1 1v22.500q0 1-1 1H1q-1 0-1-1z" fill="#fcc739" /><path d="M5 27.500v-5q0-3 3-3h15q3 0 3 3v5z" fill="#0f6cbd" /><path d="M9 23.500h13" stroke="#0b3f73" strokeWidth="1.5" /></svg>
        </TaskIcon>
        <TaskIcon>
          <svg width="31" height="29" viewBox="0 0 31 29"><path d="M0 10L15.500 0 31 10v6H0z" fill="#0b4f97" /><path d="M3 9.500h25v9H3z" fill="#f4f4f4" /><path d="M0 10l15.500 9L31 10v18H0z" fill="#1b8fe0" /><path d="M15.500 19L31 10v18z" fill="#39bdf0" /><path d="M0 28l15.500-9L31 28z" fill="#1681d4" /></svg>
        </TaskIcon>
        <TaskIcon>
          <span className="flex size-[30px] items-center justify-center rounded-full border-2 border-black font-['Inter',sans-serif] text-[10px] font-extrabold tracking-[-0.8px] text-black">DELL</span>
        </TaskIcon>
        <TaskIcon running>
          <svg width="34" height="32" viewBox="0 0 34 32" fill="none"><path d="M1 8h26" stroke="#e5261c" strokeWidth="3.500" /><path d="M4 8l6 18 7-17" stroke="#e5261c" strokeWidth="5" strokeLinejoin="round" /><path d="M16 10l5 16 7-18" stroke="#f6622a" strokeWidth="5" strokeLinejoin="round" /><path d="M22.500 5q5-7 10-1l.5 1v9H22.500z" fill="#5b93ee" /><path d="M25 8v4l2.700-1.500L30.500 12V8" stroke="#fff" strokeWidth="1.2" /></svg>
        </TaskIcon>
        <TaskIcon running><TableauMark size={28} /></TaskIcon>
        <TaskIcon running>
          <svg width="28" height="28" viewBox="0 0 28 28"><rect width="28" height="28" rx="5" fill="#b30b00" /><path d="M14 6c-3 0-1 6 2 9s8 3 7 1-8-1-12 1-6 5-4 5 6-7 7-11 1-5 0-5z" fill="none" stroke="#fff" strokeWidth="1.600" /></svg>
        </TaskIcon>
      </div>
      <div className="ml-auto flex h-full items-center">
        <div className="flex h-[48px] w-[38px] items-center justify-center rounded-[5px] bg-[#e8eefb]">
          <Svg w={14} h={9} stroke="#222" sw={1.800}><path d="M1 1l6 6 6-6" /></Svg>
        </div>
        <div className="ml-[14px] w-[48px] leading-[20px] tracking-normal"><div>ENG</div><div>INTL</div></div>
        <Svg w={22} h={16} className="ml-[3px]" stroke="#1b1b1b" sw={1.500}>
          <path d="M1.500 6.500a13.500 13.500 0 0 1 19 0M4.500 9.300a9.300 9.300 0 0 1 13 0M7.500 12a5 5 0 0 1 7 0" /><circle cx="11" cy="14" r="1.300" fill="#1b1b1b" stroke="none" />
        </Svg>
        <Svg w={22} h={18} className="ml-[8px]" stroke="#1b1b1b" sw={1.300}>
          <path d="M1 6.500h3.500L9 2.500v13L4.500 11.500H1zM12 6q2 3 0 6M14.500 4q4 5 0 10M17 2q6 7 0 14" />
        </Svg>
        <Svg w={22} h={18} className="ml-[7px]" stroke="#1b1b1b" sw={1.400}>
          <path d="M8 4.500h9a2 2 0 0 1 2 2v7a2 2 0 0 1-2 2H4a2 2 0 0 1-2-2V11" /><path d="M8 6.500h9v7H4V11z" fill="#1b1b1b" stroke="none" /><path d="M5 0L1 6h2.500L2.500 10.500 8 4.500H5.500z" fill="#1b1b1b" stroke="none" /><path d="M20 8v4" strokeWidth="2" />
        </Svg>
        <div className="ml-[10px] w-[87px] text-right leading-[20px] tracking-[0.400px]"><div>12:44</div><div>25-03-2023</div></div>
        <div className="mr-[20px] ml-[7px] flex h-[20px] w-[24px] items-center justify-center rounded-full bg-[#0067c0] text-[12px] text-white">23</div>
      </div>
    </div>
  );
}

function Thumb({ children, active, faded }: { children: ReactNode; active?: boolean; faded?: boolean }) {
  return (
    <div className={`h-[52px] w-[70px] bg-white ${active ? "outline-2 -outline-offset-2 outline-[#e06c33]" : "outline-2 -outline-offset-2 outline-[#e6e6e6]"}`}>
      <svg width="70" height="52" viewBox="0 0 70 52" className={faded ? "opacity-30" : ""}>{children}</svg>
    </div>
  );
}

function Continents({ a, b }: { a: string; b: string }) {
  return (
    <g>
      <path d="M3 13l3-2 6 1 4-1 2 1-1 3 3-2 1 3-4 4-2 4-3-1-2 2 1 3-3-2-3-4-1-6zM20 10l9 0-3 3-3 3-2-2zM12 28l4-1 6 5-1 5-4 4-1 4-2-1-1-7-3-5z" fill={a} />
      <path d="M58 36l5-2 4 5-3 1-6 0z" fill={a} />
      <path d="M28 28l3-4 7 1 3 5h2l-3 4-2 5-4 2-2-7-4-2zM29 19l3-3 1-4 4-1 3 2 7-2 8 1 12 2-3 3-2 0-1 4-3 2-1 4-3-1 1 4-3-3-3 1-1 2-3-4-5-1-1 3-3-5-6 0z" fill={b} />
    </g>
  );
}

function Rects({ c, items }: { c: string; items: number[][] }) {
  return <g fill={c}>{items.map(([x, y, w, h], i) => <rect key={i} x={x} y={y} width={w} height={h} />)}</g>;
}

function Rings({ c, items, r = 6 }: { c: string; items: number[][]; r?: number }) {
  return <g fill="none" stroke={c} strokeWidth="1.500">{items.map(([x, y], i) => <circle key={i} cx={x} cy={y} r={r} />)}</g>;
}

const lg = "#9edbb5", dg = "#55ab86", lo = "#ffbe7d", or = "#f28e2b", db = "#5085b0", lb = "#a6cff0", mb = "#7aa8cf";

function ShowMe() {
  return (
    <div className="absolute top-[62px] right-0 flex flex-col items-end font-['Open_Sans',sans-serif] text-[#222]">
      <div className="relative z-10 mr-[2px] -mb-[2px] flex h-[46px] w-[138px] items-center border-t border-l border-[#dcdcdc] bg-[#fafafa] pb-[8px] pl-[12px] text-[16px] text-black">
        <Svg w={21} h={20} stroke="none">
          <path d="M0 1h16v3.500H0z" fill="#8a729b" /><path d="M0 6h20v3.500H0z" fill="#84a5cb" /><path d="M0 11h8v3.500H0z" fill="#f3a879" /><path d="M0 16h12v3.500H0z" fill="#fb7183" />
        </Svg>
        <span className="ml-[6px] tracking-[-0.200px]">Show Me</span>
      </div>
      <div className="mr-[2px] h-[696px] w-[255px] border-2 border-r-0 border-[#dcdcdc] bg-[#fafafa] pt-[17px] pl-[16px] shadow-[2px_2px_4px_rgba(0,0,0,0.4)]">
        <div className="grid w-[220px] grid-cols-3 gap-x-[5px] gap-y-[5.600px]">
          <Thumb>
            <rect x="4" y="4" width="62" height="44" fill="#fff" stroke="#bbb" strokeWidth=".7" />
            <Rects c="#dedede" items={[[4, 4, 62, 13], [4, 28, 62, 10]]} />
            <Rects c="#aaa" items={[[8, 10, 6, 2], [8, 21.500, 8, 2], [8, 32, 5, 2]]} />
            <g fontSize="6" fill="#555" fontFamily="Open Sans"><text x="22" y="13">1234</text><text x="44" y="13">678</text><text x="22" y="24.500">368</text><text x="44" y="24.500">3034</text><text x="22" y="35.500">2620</text><text x="44" y="35.500">2559</text><text x="22" y="45.500">971</text><text x="44" y="45.500">322</text></g>
          </Thumb>
          <Thumb>
            <Rects c="#bbb" items={[[7, 9, 6, 2], [7, 21.500, 8, 2], [7, 34, 5, 2]]} />
            <Rects c={lg} items={[[17, 5, 9, 9], [56, 5, 5, 5], [17, 21, 9, 9], [43, 21, 8, 8], [56, 21, 10, 9], [30, 37, 10, 10], [56, 37, 10, 9]]} />
            <Rects c={dg} items={[[43, 5, 10, 9], [17, 36, 12, 12], [43, 36, 12, 12]]} />
            <Rects c={or} items={[[29, 5, 9, 8]]} /><Rects c={lo} items={[[30, 21, 5, 5]]} />
          </Thumb>
          <Thumb>
            <rect x="4" y="4" width="62" height="44" fill="#fff" stroke="#bbb" strokeWidth=".7" />
            <Rects c="#aaa" items={[[7, 9, 6, 2], [7, 21.500, 8, 2], [7, 33, 6, 2]]} />
            <Rects c={dg} items={[[18, 4, 24, 12], [42, 17, 24, 12], [18, 42, 24, 6]]} />
            <Rects c={lg} items={[[42, 4, 24, 12], [18, 29, 24, 12], [42, 29, 24, 12], [42, 42, 24, 6]]} />
            <Rects c={lo} items={[[18, 17, 24, 12]]} />
            <path d="M17.500 4v44M42 4v44M18 16.500h48M18 29h48M18 42h48" stroke="#555" fill="none" />
            <g fontSize="6" fill="#3a4a44" fontFamily="Open Sans"><text x="20" y="12.500">1234</text><text x="45" y="12.500">546</text><text x="20" y="25.500">368</text><text x="45" y="25.500">340</text><text x="20" y="38">2620</text><text x="45" y="38">53890</text></g>
          </Thumb>
          <Thumb active>
            <Continents a="#dcdcdc" b="#dcdcdc" />
            <g fill="#c8283c"><circle cx="5" cy="24.500" r="3" /><circle cx="6" cy="20" r="1.500" /><circle cx="51" cy="23" r="3.500" /><circle cx="35.500" cy="20.500" r="2" /><circle cx="14" cy="32" r="1.500" /><circle cx="55" cy="26" r="1.500" /><circle cx="61" cy="38" r="1.500" /></g>
            <g fill="#e5675c"><circle cx="31" cy="15" r="2" /><circle cx="57" cy="30" r="2.500" /><circle cx="40" cy="27" r="1.500" /><circle cx="57" cy="22" r="1.500" /></g>
            <g fill="#ff9d9a"><circle cx="14" cy="20" r="2" /><circle cx="29.500" cy="20" r="2" /><circle cx="21.500" cy="34" r="2.200" /></g>
          </Thumb>
          <Thumb><Continents a="#e0655a" b="#ff9d9a" /></Thumb>
          <Thumb>
            <path d="M35 25.500V7.500A18 18 0 0 0 17 25.500z" fill="#e0655a" /><path d="M35 25.500V7.500A18 18 0 0 1 47.700 12.800z" fill="#ff9d9a" /><path d="M35 25.500L47.700 12.800A18 18 0 0 1 47.700 38.200z" fill={db} /><path d="M35 25.500L47.700 38.200A18 18 0 0 1 17 25.500z" fill={lb} />
          </Thumb>
          <Thumb><Rects c={db} items={[[7, 8.500, 30, 5], [7, 18.500, 55, 5], [7, 28.500, 15, 5], [7, 38.500, 44, 5]]} /></Thumb>
          <Thumb>
            <Rects c={db} items={[[9, 12, 11, 9], [22, 19.500, 11, 10], [37, 16, 11, 24], [52, 25, 11, 11.500]]} />
            <Rects c={lb} items={[[9, 21, 11, 28], [22, 29.500, 11, 19.500], [37, 40, 11, 9], [52, 36.500, 11, 12.500]]} />
          </Thumb>
          <Thumb faded>
            <path d="M18.500 1v40M37.500 1v40" stroke="#aaa" fill="none" />
            <Rects c={db} items={[[5, 26, 4, 15], [23, 11, 4.500, 30], [42, 31, 4, 10]]} /><Rects c={lb} items={[[10, 18, 4, 23], [29, 22, 4, 19], [47, 17, 4, 24]]} />
          </Thumb>
          <Thumb>
            <Rects c={mb} items={[[8, 6, 26, 19], [36, 6, 13, 13], [46, 20, 8.500, 13]]} /><Rects c={db} items={[[8, 26.500, 26, 18], [56, 34.500, 8, 5]]} />
            <Rects c={lb} items={[[50.500, 6, 13.500, 13], [56, 20, 8, 13], [46, 34.500, 8.500, 10.500], [56, 41, 8, 4]]} /><Rects c="#ff9d9a" items={[[35.500, 20, 9, 13]]} /><Rects c="#e0655a" items={[[35.500, 34.500, 9, 10.500]]} />
          </Thumb>
          <Thumb>
            <Rings c={mb} items={[[14, 13.500], [58, 13.500], [36, 37]]} /><Rings c={db} items={[[14, 19], [14, 36], [36, 13.500], [36, 31]]} /><Rings c={lb} items={[[58, 22.500], [58, 42.500], [36, 52]]} />
          </Thumb>
          <Thumb faded>
            <path d="M28.500 1v40" stroke="#aaa" /><Rings r={3.600} c={lb} items={[[9, 9], [9, 13], [19, 25], [38, 9], [40, 28], [48, 30.500]]} /><Rings r={3.600} c={db} items={[[19, 13], [9, 32], [19, 35], [48, 13], [48, 18], [38, 32]]} />
          </Thumb>
          <Thumb faded>
            <g fill="none" strokeWidth="1.600"><path d="M5 12l7-6 12 14 9-7 7 8 12-6" stroke={or} /><path d="M5 19l8 2 10-9 12 10 6 3 11-2" stroke={lo} /><path d="M5 26l7 7 18-9 10 6 12-2" stroke={db} /></g>
          </Thumb>
          <Thumb faded>
            <path d="M28.500 2v39" stroke="#aaa" /><g fill="none" strokeWidth="1.600"><path d="M4 17l8 1 6-6h7M32 18l7-8 5 4 8-2" stroke={or} /><path d="M4 24l8 0 6-8 6 3M32 24l7-3 6 2 7-4" stroke={lo} /><path d="M4 31l7 2 6-5 8-1M32 31l6-4 6 3 8-3" stroke={db} /></g>
          </Thumb>
          <Thumb faded>
            <g fill="none" strokeWidth="1.600"><path d="M9 16l8-10 10 9 5-4 10 6 7-6" stroke={or} /><path d="M10 28l8-8 9 9 6-3 9 5 7-8" stroke={db} /></g><path d="M4 4v36M52 4v36" stroke="#bbb" strokeDasharray="1 5" strokeWidth="4" />
          </Thumb>
          <Thumb faded>
            <path d="M3 22L15 7l21 13 17-6v11l-17 6-21-13L3 27z" fill={db} /><path d="M3 22l12-7 21 14 17-11v14l-17 4H3z" fill={or} opacity=".7" /><path d="M3 30l12-5 21 7 17-7v13H3z" fill="#ffe0bd" />
          </Thumb>
          <Thumb faded>
            <path d="M3 24L8 7l11 14 8-7v12l-9 4-10-8-5 6zM30 22l5-15 10 14 9-7v12l-9 4-10-8-5 6z" fill={db} /><path d="M3 27l5-11 11 12 8-8v18H3zM30 27l5-11 10 12 9-8v18H30z" fill={or} opacity=".7" /><path d="M3 32l5-6 11 6 8-6v12H3zM30 32l5-6 10 6 9-6v12H30z" fill="#ffe0bd" />
          </Thumb>
          <Thumb faded>
            <Rects c={db} items={[[10, 21, 4, 17], [18, 17, 5, 21], [26, 25, 5, 13], [34, 7, 5.500, 31], [43, 21, 5, 17]]} /><path d="M11 18l9-8 8 11 9-10 9 10" fill="none" stroke={or} strokeWidth="1.600" /><path d="M4 4v36M52 4v36" stroke="#bbb" strokeDasharray="1 5" strokeWidth="4" />
          </Thumb>
          <Thumb faded>
            <Rings r={3.800} c={or} items={[[22, 12], [42, 15], [14, 22], [25, 26], [8, 34]]} /><path d="M34 4v9M29.500 8h9M31 14v9M26.500 18h9M46 20v9M41.500 24.500h9M36 26v9M31.500 30.500h9M14 32.500h8M18 28.500v8" stroke={dg} strokeWidth="1.300" />
          </Thumb>
          <Thumb faded><Rects c={dg} items={[[6, 35, 4, 3], [11, 30, 4, 8], [16, 22, 4, 16], [21, 11, 4, 27], [26, 7, 4, 31], [31, 11, 4, 27], [36, 22, 4, 16], [41, 30, 4, 8], [46, 35, 4, 3]]} /></Thumb>
          <Thumb>
            <Rects c={lg} items={[[8, 22, 9, 5], [24, 16, 9, 11], [39, 21, 9, 10], [55, 14, 9, 14]]} /><Rects c={dg} items={[[8, 27, 9, 11], [24, 27, 9, 6], [39, 31, 9, 9], [55, 28, 9, 7]]} />
            <path d="M12.500 13v29M9.500 13h6M9.500 42h6M28.500 11v34M25 11h7M25 45h7M43.500 9v37M40 9h7M40 46h7M59.500 7v40M56 7h7M56 47h7" stroke="#222" strokeWidth="1.300" />
          </Thumb>
          <Thumb faded>
            <Rects c={dg} items={[[3, 3, 10, 8], [10, 16, 4, 8], [18, 16, 4, 8], [3, 29, 2, 8], [34, 29, 7, 8]]} /><Rects c={lg} items={[[3, 16, 7, 8], [25, 16, 14, 8], [23, 29, 4, 8]]} /><Rects c={or} items={[[20, 3, 4, 8], [36, 3, 2, 8], [45, 16, 8, 8], [19, 29, 2, 8]]} /><Rects c={lo} items={[[25, 3, 4, 8], [42, 3, 8, 8], [9, 29, 10, 8], [46, 29, 4, 8]]} />
          </Thumb>
          <Thumb faded>
            <Rects c="#eee" items={[[6, 4, 47, 8], [6, 17, 47, 8], [6, 29, 47, 8]]} /><Rects c={dg} items={[[6, 6, 24, 4], [6, 19, 40, 4], [6, 31, 20, 4]]} /><Rects c="#333" items={[[40, 17, 1.500, 8], [46, 29, 1.500, 8]]} />
          </Thumb>
          <Thumb>
            <g fill={dg}><circle cx="20.500" cy="16" r="4.300" /><circle cx="32.500" cy="12.500" r="6.200" /><circle cx="37.500" cy="40.500" r="5.200" /></g><g fill={lg}><circle cx="19" cy="33.500" r="12" /><circle cx="44.500" cy="14" r="4" /></g><g fill={lo}><circle cx="57" cy="19.500" r="8.300" /><circle cx="38.500" cy="26.500" r="7.300" /></g><circle cx="50" cy="33" r="4.700" fill={or} />
          </Thumb>
        </div>
        <div className="mt-[20px] ml-[2px] flex flex-col text-[15px] tracking-[-0.250px]">
          <div className="h-[31px] leading-[24px]">For <b>symbol maps</b> try</div>
          <div className="flex h-[35px] items-start leading-[29px]">
            <span className="w-[45px]">1 geo</span>
            <span className="mt-[5px]"><Globe color="#555" /></span>
            <span className="ml-[7px] flex h-[25px] w-[105px] items-center justify-center rounded-full bg-[#4996b2] pr-[2px] font-semibold tracking-[0.200px] text-white">Dimension</span>
          </div>
          <div className="flex h-[35px] items-start leading-[29px]">
            <span className="w-[71px]">0 or more</span>
            <span className="flex h-[25px] w-[113px] items-center justify-center rounded-full bg-[#4996b2] pr-[3px] font-semibold tracking-[0.200px] text-white">Dimensions</span>
          </div>
          <div className="flex h-[35px] items-start leading-[29px]">
            <span className="w-[43px]">0 to 2</span>
            <span className="flex h-[25px] w-[99px] items-center justify-center rounded-full bg-[#00b180] pr-[2px] font-semibold tracking-[0.200px] text-white">Measures</span>
          </div>
          <div className="mt-[4px] leading-[20px] tracking-[-0.150px] text-[#8c8c8c]">May use spatial measure in<br />place of geo dimension</div>
        </div>
      </div>
    </div>
  );
}

function TrayPopup() {
  const cell = "flex h-[50px] w-[50px] items-center justify-center";
  return (
    <div className="absolute top-[893px] left-[1473px] flex h-[111px] w-[261px] flex-wrap content-start rounded-[9px] bg-[#f7f7f7] pt-[5px] pl-[5px] shadow-[0_4px_14px_rgba(0,0,0,0.28),0_0_1px_rgba(0,0,0,0.4)]">
      <div className={`${cell} rounded-[5px] border border-[#ececec] bg-[#fdfdfd]`}>
        <svg width="20" height="20" viewBox="0 0 20 20"><path d="M19 0q0 12-12 15Q4 16 1 19 2 8 19 0z" fill="#a77bc9" /><path d="M18 2Q8 8 1 19" stroke="#5c2d91" fill="none" strokeWidth="1.300" /></svg>
      </div>
      <div className={cell}><svg width="20" height="20" viewBox="0 0 20 20"><circle cx="9.500" cy="10" r="9.500" fill="#f9982a" /><circle cx="9.500" cy="10" r="6.500" fill="#fdb62f" /><path d="M9.500 4.500l5 5.500h-3v4.500h-4V10h-3z" fill="#fff7a8" /></svg></div>
      <div className={cell}><svg width="22" height="20" viewBox="0 0 22 20" stroke="#111" strokeWidth="1.300"><path d="M5 15.500a4 4 0 0 1 0-8 6 6 0 0 1 11-1 4.500 4.500 0 0 1 1.500 9z" fill="#c9c9c9" /><path d="M3 2l16 16" strokeWidth="1.600" /></svg></div>
      <div className={cell}><svg width="17" height="15" viewBox="0 0 17 15"><path d="M0 1h10L8 5H5l3 5v4z" fill="#f0702a" /><path d="M12 1h4L9 14V9z" fill="#1a2238" /><path d="M10 1h3v2h-3z" fill="#1a2238" /></svg></div>
      <div className={cell}><svg width="20" height="20" viewBox="0 0 20 20" fill="none" stroke="#fff" strokeWidth="1.200"><rect width="20" height="20" fill="#0f86e0" stroke="none" /><path d="M6 5V2.500h10v15H6V16M13 8H4l3-3M4 11.500h9l-3 3" /></svg></div>
      <div className={cell}><span className="flex size-[20px] items-center justify-center border-2 border-[#8a1a8f] bg-[#ecd0ee] font-['Liberation_Sans',sans-serif] text-[15px] leading-none font-bold text-[#6a1b6f]">N</span></div>
      <div className={cell}><svg width="20" height="20" viewBox="0 0 20 20"><path d="M9.500 0q4 3 9 2.500V9q0 7-9 11Q.5 16 .5 9V2.500Q5 3 9.500 0z" fill="#1482d8" /><path d="M.5 9V2.500Q5 3 9.500 0v9z" fill="#3cbcf2" /><path d="M14 8l6 11.500H8z" fill="#fcc419" /><path d="M14 12v4M14 17v1.500" stroke="#222" strokeWidth="1.300" /></svg></div>
      <div className={cell}><svg width="20" height="20" viewBox="0 0 20 20" fill="none" stroke="#fff" strokeWidth="1.400"><rect width="20" height="20" rx="2" fill="#d95f0e" stroke="none" /><path d="M11 2q-4 4-1 7M13 5q-2 2-1 4M6 11h8q0 3-4 3t-4-3zM14 11q3 0 0 2.500M5 16.500h10" /></svg></div>
    </div>
  );
}

export default function App() {
  return (
    <div className="relative flex h-[1079px] w-[1917px] flex-col overflow-hidden bg-[#f4f4f4]">
      <TitleBar />
      <MenuBar />
      <Toolbar />
      <div className="flex h-[850px] shrink-0 flex-col font-['Open_Sans',sans-serif] text-[15px] leading-[22px]">
        <div className="flex min-h-0 flex-1">
          <DataPane />
          <Cards />
          <Worksheet />
        </div>
      </div>
      <div className="flex shrink-0 flex-col font-['Open_Sans',sans-serif] text-[15px]">
        <SheetTabs />
        <StatusBar />
      </div>
      <Taskbar />
      <ShowMe />
      <TrayPopup />
    </div>
  );
}
